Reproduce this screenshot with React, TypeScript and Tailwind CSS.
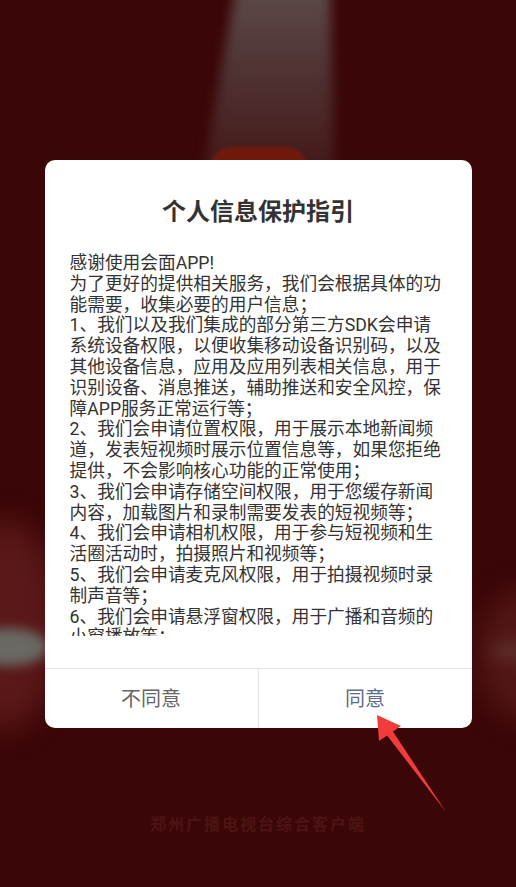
import React from "react";

const lines = [
  "感谢使用会面APP!",
  "为了更好的提供相关服务，我们会根据具体的功",
  "能需要，收集必要的用户信息；",
  "1、我们以及我们集成的部分第三方SDK会申请",
  "系统设备权限，以便收集移动设备识别码，以及",
  "其他设备信息，应用及应用列表相关信息，用于",
  "识别设备、消息推送，辅助推送和安全风控，保",
  "障APP服务正常运行等；",
  "2、我们会申请位置权限，用于展示本地新闻频",
  "道，发表短视频时展示位置信息等，如果您拒绝",
  "提供，不会影响核心功能的正常使用；",
  "3、我们会申请存储空间权限，用于您缓存新闻",
  "内容，加载图片和录制需要发表的短视频等；",
  "4、我们会申请相机权限，用于参与短视频和生",
  "活圈活动时，拍摄照片和视频等；",
  "5、我们会申请麦克风权限，用于拍摄视频时录",
  "制声音等；",
  "6、我们会申请悬浮窗权限，用于广播和音频的",
  "小窗播放等；",
];

export default function App() {
  return (
    <div
      className="relative w-[516px] h-[887px] overflow-hidden bg-[#3b0607]"
      style={{ fontFamily: 'Roboto, "Noto Sans CJK SC", "Noto Sans", sans-serif' }}
    >
      {/* background art */}
      <div className="pointer-events-none absolute inset-0">
        {/* spotlight beam */}
        <div className="absolute left-[195px] top-[-20px] w-[150px] h-[190px] blur-[6px]">
          <div
            className="w-full h-full bg-gradient-to-b from-[#5e4c4c] via-[#4f3232] to-[#441818]"
            style={{ clipPath: "polygon(28% 0, 90% 0, 93% 100%, 6% 100%)" }}
          />
        </div>
        {/* logo shape */}
        <div className="absolute left-[210px] top-[147px] w-[98px] h-[60px] rounded-[22px] blur-[1.5px] bg-gradient-to-b from-[#721a0c] to-[#661208]" />
        {/* edge glows */}
        <div className="absolute left-[-50px] top-[520px] w-[110px] h-[210px] rounded-[50%] blur-[14px] bg-[#5a1818]" />
        <div className="absolute left-[-30px] top-[628px] w-[78px] h-[38px] rounded-[50%] blur-[6px] bg-[#6a6964]" />
        <div className="absolute left-[476px] top-[590px] w-[100px] h-[130px] rounded-[50%] blur-[14px] bg-[#521616]" />
        <div className="absolute left-[490px] top-[642px] w-[46px] h-[18px] rounded-[50%] blur-[8px] bg-[#5c302e]" />
      </div>

      <div className="relative flex flex-col items-center">
        {/* dialog */}
        <div className="mt-[160px] w-[427px] h-[568px] rounded-[10px] bg-white flex flex-col overflow-hidden">
          <div className="pt-[36px] h-[68px] text-center text-[24px] leading-[32px] font-bold text-[#333333]">
            个人信息保护指引
          </div>
          <div className="mt-[25px] ml-[25px] w-[380px] h-[383px] overflow-hidden text-[17.7px] leading-[20.8px] text-[#333333]">
            {lines.map((l, i) => (
              <div key={i} className="whitespace-nowrap">
                {l}
              </div>
            ))}
          </div>
          <div className="mt-[32px] h-px bg-[#e3e3e3]" />
          <div className="flex h-[59px]">
            <div className="flex-1 flex items-center justify-center text-[20px] text-[#666666]">
              不同意
            </div>
            <div className="w-px bg-[#e3e3e3]" />
            <div className="flex-1 flex items-center justify-center text-[20px] text-[#5a6f89]">
              同意
            </div>
          </div>
        </div>

        <div className="mt-[85px] text-[16px] leading-[24px] font-bold tracking-[2px] text-[#4e1414]">
          郑州广播电视台综合客户端
        </div>
      </div>

      {/* red arrow */}
      <svg
        className="pointer-events-none absolute left-[370px] top-[710px]"
        width="82"
        height="106"
        viewBox="0 0 82 106"
      >
        <polygon
          points="7,5 31,16 22.9,21.5 76,102 17.1,25.5 9,31"
          fill="#f23c3c"
        />
      </svg>
    </div>
  );
}
